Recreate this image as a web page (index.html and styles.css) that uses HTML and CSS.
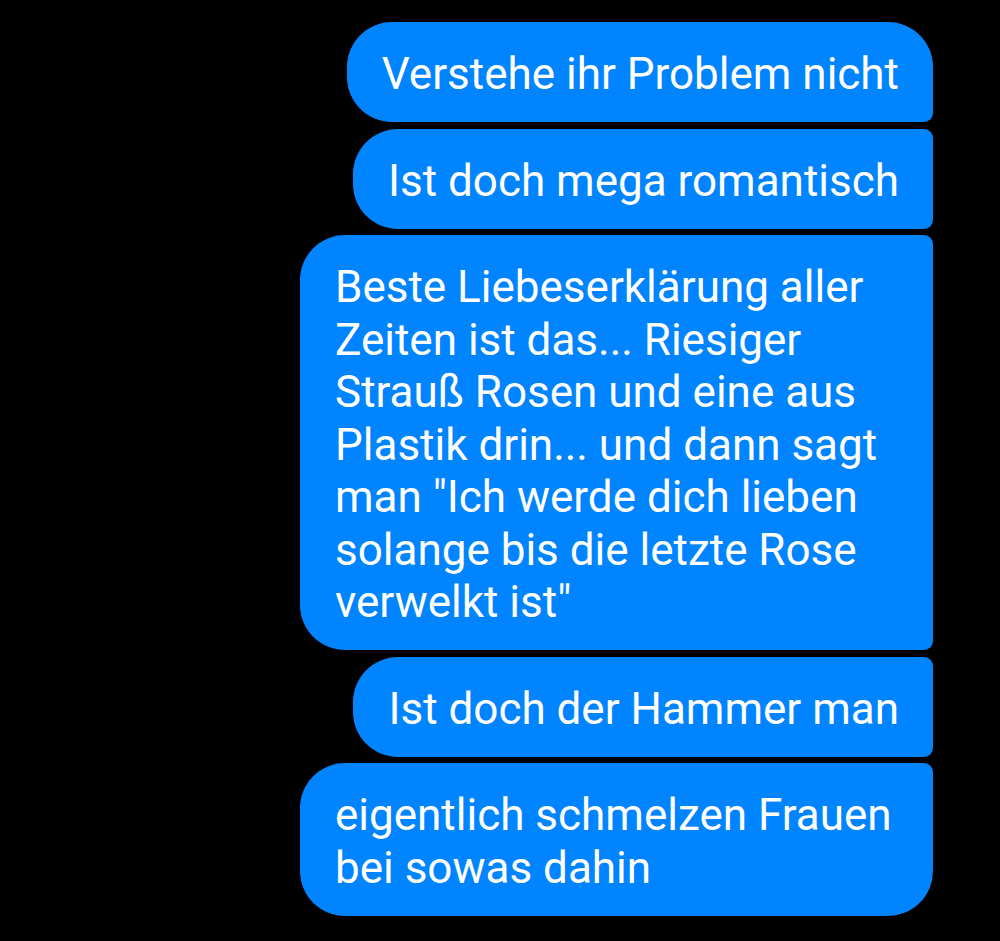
FILE: index.html
```html
<!DOCTYPE html>
<html lang="de">
<head>
    <meta charset="UTF-8">
    <meta name="viewport" content="width=device-width, initial-scale=1.0">
    <title>Chat</title>
    <link rel="stylesheet" href="styles.css">
</head>
<body>

<div class="chat">
    <div class="bubble first">Verstehe ihr Problem nicht</div>
    <div class="bubble">Ist doch mega romantisch</div>
    <div class="bubble">Beste Liebeserklärung aller Zeiten ist das... Riesiger Strauß Rosen und eine aus Plastik drin... und dann sagt man "Ich werde dich lieben solange bis die letzte Rose verwelkt ist"</div>
    <div class="bubble">Ist doch der Hammer man</div>
    <div class="bubble last">eigentlich schmelzen Frauen bei sowas dahin</div>
</div>

</body>
</html>
```

FILE: styles.css
```css
/* Grundstil */
* {
    box-sizing: border-box;
    margin: 0;
    padding: 0;
}

body {
    background-color: #000000;
    font-family: Roboto, "Noto Sans", sans-serif;
    min-height: 100vh;
}

/* Nachrichtenliste */
.chat {
    display: flex;
    flex-direction: column;
    align-items: flex-end;
    gap: 6.5px;
    padding: 22px 67px 0 0;
}

/* Sprechblasen */
.bubble {
    max-width: 633px;
    padding: 26px 34px 21.5px 35px;
    background-color: #0084ff;
    color: #ffffff;
    font-size: 44px;
    line-height: 52.5px;
    border-radius: 45px 9px 9px 45px;
}

.bubble.first {
    border-top-right-radius: 45px;
}

.bubble.last {
    border-bottom-right-radius: 45px;
}
```
